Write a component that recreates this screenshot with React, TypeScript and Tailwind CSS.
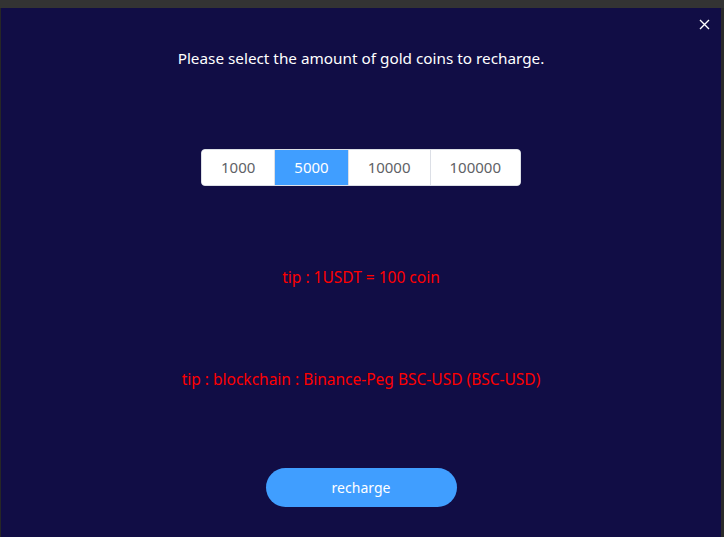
import React, { useState } from "react";

export default function App() {
  const [sel, setSel] = useState(5000);
  const opts = [1000, 5000, 10000, 100000];
  return (
    <div className="w-[724px] h-[537px] bg-[#2f2f2f] flex flex-col overflow-hidden" style={{ fontFamily: '"Noto Sans", "Open Sans", sans-serif' }}>
      <div className="h-[8px] bg-[#333333] shrink-0" />
      <div className="flex flex-1">
        <div className="w-[1px] bg-[#262626]" />
        <div className="relative w-[720px] bg-[#110d45] flex flex-col items-center">
          <button className="absolute right-[10px] top-[9px] text-white w-[14px] h-[14px] flex items-center justify-center">
            <svg width="11" height="11" viewBox="0 0 11 11" stroke="white" strokeWidth="1.4" fill="none">
              <path d="M1 1 L10 10 M10 1 L1 10" />
            </svg>
          </button>
          <div className="mt-[39px] text-white text-[15.3px] leading-[22px]">Please select the amount of gold coins to recharge.</div>
          <div className="mt-[80px] flex h-[37px] rounded-[4px] overflow-hidden bg-white text-[15px] border border-[#dcdfe6]">
            {opts.map((o, i) => (
              <button
                key={o}
                onClick={() => setSel(o)}
                className={
                  "px-[19px] h-full flex items-center justify-center " +
                  (sel === o ? "bg-[#409eff] text-white" : "bg-white text-[#606266]") +
                  (i > 0 ? " border-l border-[#dcdfe6]" : "")
                }
              >
                {o}
              </button>
            ))}
          </div>
          <div className="mt-[80px] text-[#ff0000] text-[15.5px] leading-[22px]">tip : 1USDT = 100 coin</div>
          <div className="mt-[80px] text-[#ff0000] text-[15.5px] leading-[22px]">tip : blockchain : Binance-Peg BSC-USD (BSC-USD)</div>
          <button className="mt-[78px] w-[191px] h-[39px] rounded-full bg-[#409eff] text-white text-[14px]">recharge</button>
        </div>
        <div className="flex-1 bg-[#2a2a2a]" />
      </div>
    </div>
  );
}
